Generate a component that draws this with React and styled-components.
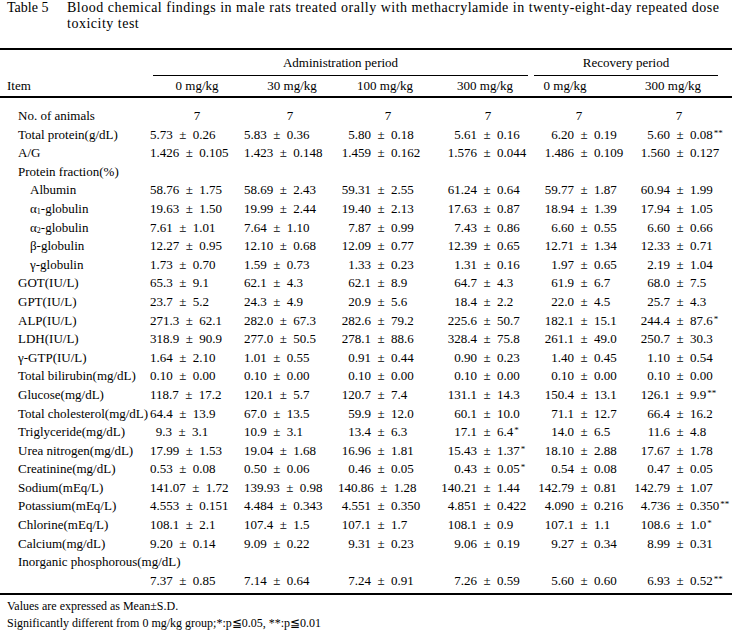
import React from 'react';
import styled, { createGlobalStyle } from 'styled-components';

const Global = createGlobalStyle`
  html, body { margin: 0; padding: 0; background: #fff; }
  body { font-family: "Liberation Serif", "Times New Roman", serif; color: #000; }
`;

const COLS = [
  { start: 150, hdr: 197, seven: 197, pm: 182 },
  { start: 244, hdr: 292, seven: 290, pm: 274 },
  { start: 338, hdr: 385, seven: 388, pm: 381 },
  { start: 435, hdr: 485, seven: 488, pm: 487 },
  { start: 531, hdr: 565, seven: 579, pm: 584 },
  { start: 619, hdr: 673, seven: 679, pm: 680 },
];
const GRID = '150px 94px 94px 97px 96px 88px 113px';
const ROW_H = 18.6;

const Page = styled.div`
  width: 732px;
  height: 633px;
  overflow: hidden;
`;

const Caption = styled.div`
  display: flex;
  font-size: 14px;
  line-height: 16px;
  padding-right: 4px;
`;
const CaptionLabel = styled.div`
  flex: 0 0 67px;
  box-sizing: border-box;
  padding-left: 7px;
`;
const CaptionText = styled.div`
  flex: 1;
  letter-spacing: 0.5px;
`;

const Table = styled.div`
  margin-top: 16px;
  border-top: 2px solid #000;
  border-bottom: 2px solid #000;
  font-size: 13px;
`;

const HeadRow = styled.div`
  display: grid;
  grid-template-columns: ${GRID};
  height: ${p => p.$h}px;
  line-height: ${p => p.$h}px;
  border-bottom: ${p => (p.$rule ? '2px solid #000' : 'none')};
`;

const GroupCell = styled.div`
  grid-column: ${p => p.$col};
  margin: ${p => p.$margin};
  border-bottom: 1px solid #000;
  text-align: center;
  line-height: ${p => p.$lh}px;
  white-space: nowrap;
`;

const Body = styled.div`
  padding: 9px 0 3px;
`;

const Row = styled.div`
  display: grid;
  grid-template-columns: ${GRID};
  height: ${ROW_H}px;
  line-height: ${ROW_H}px;
  white-space: nowrap;
`;

const Label = styled.div`
  padding-left: ${p => (p.$indent ? 30 : p.$item ? 7 : 18)}px;
`;

const Cell = styled.div`
  display: flex;
  min-width: 0;
`;

const Anchor = styled.div`
  width: 0;
  margin-left: ${p => p.$x}px;
  display: flex;
  justify-content: center;
  white-space: nowrap;
`;

const Left = styled.div`
  flex: 0 0 ${p => p.$w}px;
  display: flex;
  justify-content: flex-end;
`;

const Pm = styled.div`
  flex: 0 0 20px;
  text-align: center;
`;

const Right = styled.div`
  white-space: nowrap;
`;

const Star = styled.span`
  font-size: 9px;
  vertical-align: 3px;
  line-height: 0;
  margin-left: 1px;
`;

const Sub = styled.span`
  font-size: 8px;
  vertical-align: -1px;
  line-height: 0;
`;

const Notes = styled.div`
  padding: 3px 0 0 7px;
  font-size: 12px;
  line-height: 17px;
`;

const V = (m, s, star) => [m, s, star];

const ROWS = [
  { label: 'No. of animals', seven: true },
  { label: 'Total protein(g/dL)', vals: [V('5.73', '0.26'), V('5.83', '0.36'), V('5.80', '0.18'), V('5.61', '0.16'), V('6.20', '0.19'), V('5.60', '0.08', '**')] },
  { label: 'A/G', vals: [V('1.426', '0.105'), V('1.423', '0.148'), V('1.459', '0.162'), V('1.576', '0.044'), V('1.486', '0.109'), V('1.560', '0.127')] },
  { label: 'Protein fraction(%)' },
  { label: 'Albumin', indent: true, vals: [V('58.76', '1.75'), V('58.69', '2.43'), V('59.31', '2.55'), V('61.24', '0.64'), V('59.77', '1.87'), V('60.94', '1.99')] },
  { label: <>α<Sub>1</Sub>-globulin</>, indent: true, vals: [V('19.63', '1.50'), V('19.99', '2.44'), V('19.40', '2.13'), V('17.63', '0.87'), V('18.94', '1.39'), V('17.94', '1.05')] },
  { label: <>α<Sub>2</Sub>-globulin</>, indent: true, vals: [V('7.61', '1.01'), V('7.64', '1.10'), V('7.87', '0.99'), V('7.43', '0.86'), V('6.60', '0.55'), V('6.60', '0.66')] },
  { label: 'β-globulin', indent: true, vals: [V('12.27', '0.95'), V('12.10', '0.68'), V('12.09', '0.77'), V('12.39', '0.65'), V('12.71', '1.34'), V('12.33', '0.71')] },
  { label: 'γ-globulin', indent: true, vals: [V('1.73', '0.70'), V('1.59', '0.73'), V('1.33', '0.23'), V('1.31', '0.16'), V('1.97', '0.65'), V('2.19', '1.04')] },
  { label: 'GOT(IU/L)', vals: [V('65.3', '9.1'), V('62.1', '4.3'), V('62.1', '8.9'), V('64.7', '4.3'), V('61.9', '6.7'), V('68.0', '7.5')] },
  { label: 'GPT(IU/L)', vals: [V('23.7', '5.2'), V('24.3', '4.9'), V('20.9', '5.6'), V('18.4', '2.2'), V('22.0', '4.5'), V('25.7', '4.3')] },
  { label: 'ALP(IU/L)', vals: [V('271.3', '62.1'), V('282.0', '67.3'), V('282.6', '79.2'), V('225.6', '50.7'), V('182.1', '15.1'), V('244.4', '87.6', '*')] },
  { label: 'LDH(IU/L)', vals: [V('318.9', '90.9'), V('277.0', '50.5'), V('278.1', '88.6'), V('328.4', '75.8'), V('261.1', '49.0'), V('250.7', '30.3')] },
  { label: 'γ-GTP(IU/L)', vals: [V('1.64', '2.10'), V('1.01', '0.55'), V('0.91', '0.44'), V('0.90', '0.23'), V('1.40', '0.45'), V('1.10', '0.54')] },
  { label: 'Total bilirubin(mg/dL)', vals: [V('0.10', '0.00'), V('0.10', '0.00'), V('0.10', '0.00'), V('0.10', '0.00'), V('0.10', '0.00'), V('0.10', '0.00')] },
  { label: 'Glucose(mg/dL)', vals: [V('118.7', '17.2'), V('120.1', '5.7'), V('120.7', '7.4'), V('131.1', '14.3'), V('150.4', '13.1'), V('126.1', '9.9', '**')] },
  { label: 'Total cholesterol(mg/dL)', vals: [V('64.4', '13.9'), V('67.0', '13.5'), V('59.9', '12.0'), V('60.1', '10.0'), V('71.1', '12.7'), V('66.4', '16.2')] },
  { label: 'Triglyceride(mg/dL)', vals: [V('9.3', '3.1'), V('10.9', '3.1'), V('13.4', '6.3'), V('17.1', '6.4', '*'), V('14.0', '6.5'), V('11.6', '4.8')] },
  { label: 'Urea nitrogen(mg/dL)', vals: [V('17.99', '1.53'), V('19.04', '1.68'), V('16.96', '1.81'), V('15.43', '1.37', '*'), V('18.10', '2.88'), V('17.67', '1.78')] },
  { label: 'Creatinine(mg/dL)', vals: [V('0.53', '0.08'), V('0.50', '0.06'), V('0.46', '0.05'), V('0.43', '0.05', '*'), V('0.54', '0.08'), V('0.47', '0.05')] },
  { label: 'Sodium(mEq/L)', vals: [V('141.07', '1.72'), V('139.93', '0.98'), V('140.86', '1.28'), V('140.21', '1.44'), V('142.79', '0.81'), V('142.79', '1.07')] },
  { label: 'Potassium(mEq/L)', vals: [V('4.553', '0.151'), V('4.484', '0.343'), V('4.551', '0.350'), V('4.851', '0.422'), V('4.090', '0.216'), V('4.736', '0.350', '**')] },
  { label: 'Chlorine(mEq/L)', vals: [V('108.1', '2.1'), V('107.4', '1.5'), V('107.1', '1.7'), V('108.1', '0.9'), V('107.1', '1.1'), V('108.6', '1.0', '*')] },
  { label: 'Calcium(mg/dL)', vals: [V('9.20', '0.14'), V('9.09', '0.22'), V('9.31', '0.23'), V('9.06', '0.19'), V('9.27', '0.34'), V('8.99', '0.31')] },
  { label: 'Inorganic phosphorous(mg/dL)' },
  { label: '', vals: [V('7.37', '0.85'), V('7.14', '0.64'), V('7.24', '0.91'), V('7.26', '0.59'), V('5.60', '0.60'), V('6.93', '0.52', '**')] },
];

const HEADERS = ['0 mg/kg', '30 mg/kg', '100 mg/kg', '300 mg/kg', '0 mg/kg', '300 mg/kg'];

function ValueCell({ col, v }) {
  const [m, s, star] = v;
  return (
    <Cell>
      <Left $w={col.pm - col.start - 10}>{m}</Left>
      <Pm>±</Pm>
      <Right>
        {s}
        {star && <Star>{star}</Star>}
      </Right>
    </Cell>
  );
}

export default function App() {
  return (
    <Page>
      <Global />
      <Caption>
        <CaptionLabel>Table 5</CaptionLabel>
        <CaptionText>
          Blood chemical findings in male rats treated orally with methacrylamide in twenty-eight-day repeated dose toxicity test
        </CaptionText>
      </Caption>
      <Table>
        <HeadRow $h={26}>
          <GroupCell $col="2 / span 4" $margin="0 3px" $lh={25}>Administration period</GroupCell>
          <GroupCell $col="6 / span 2" $margin="0 14px 0 3px" $lh={25}>Recovery period</GroupCell>
        </HeadRow>
        <HeadRow $h={20} $rule>
          <Label $item>Item</Label>
          {COLS.map((c, i) => (
            <Cell key={i}>
              <Anchor $x={c.hdr - c.start}>{HEADERS[i]}</Anchor>
            </Cell>
          ))}
        </HeadRow>
        <Body>
          {ROWS.map((r, ri) => (
            <Row key={ri}>
              <Label $indent={r.indent}>{r.label}</Label>
              {r.seven &&
                COLS.map((c, i) => (
                  <Cell key={i}>
                    <Anchor $x={c.seven - c.start}>7</Anchor>
                  </Cell>
                ))}
              {r.vals && r.vals.map((v, i) => <ValueCell key={i} col={COLS[i]} v={v} />)}
            </Row>
          ))}
        </Body>
      </Table>
      <Notes>
        <div>Values are expressed as Mean±S.D.</div>
        <div>Significantly different from 0 mg/kg group;*:p≦0.05, **:p≦0.01</div>
      </Notes>
    </Page>
  );
}
